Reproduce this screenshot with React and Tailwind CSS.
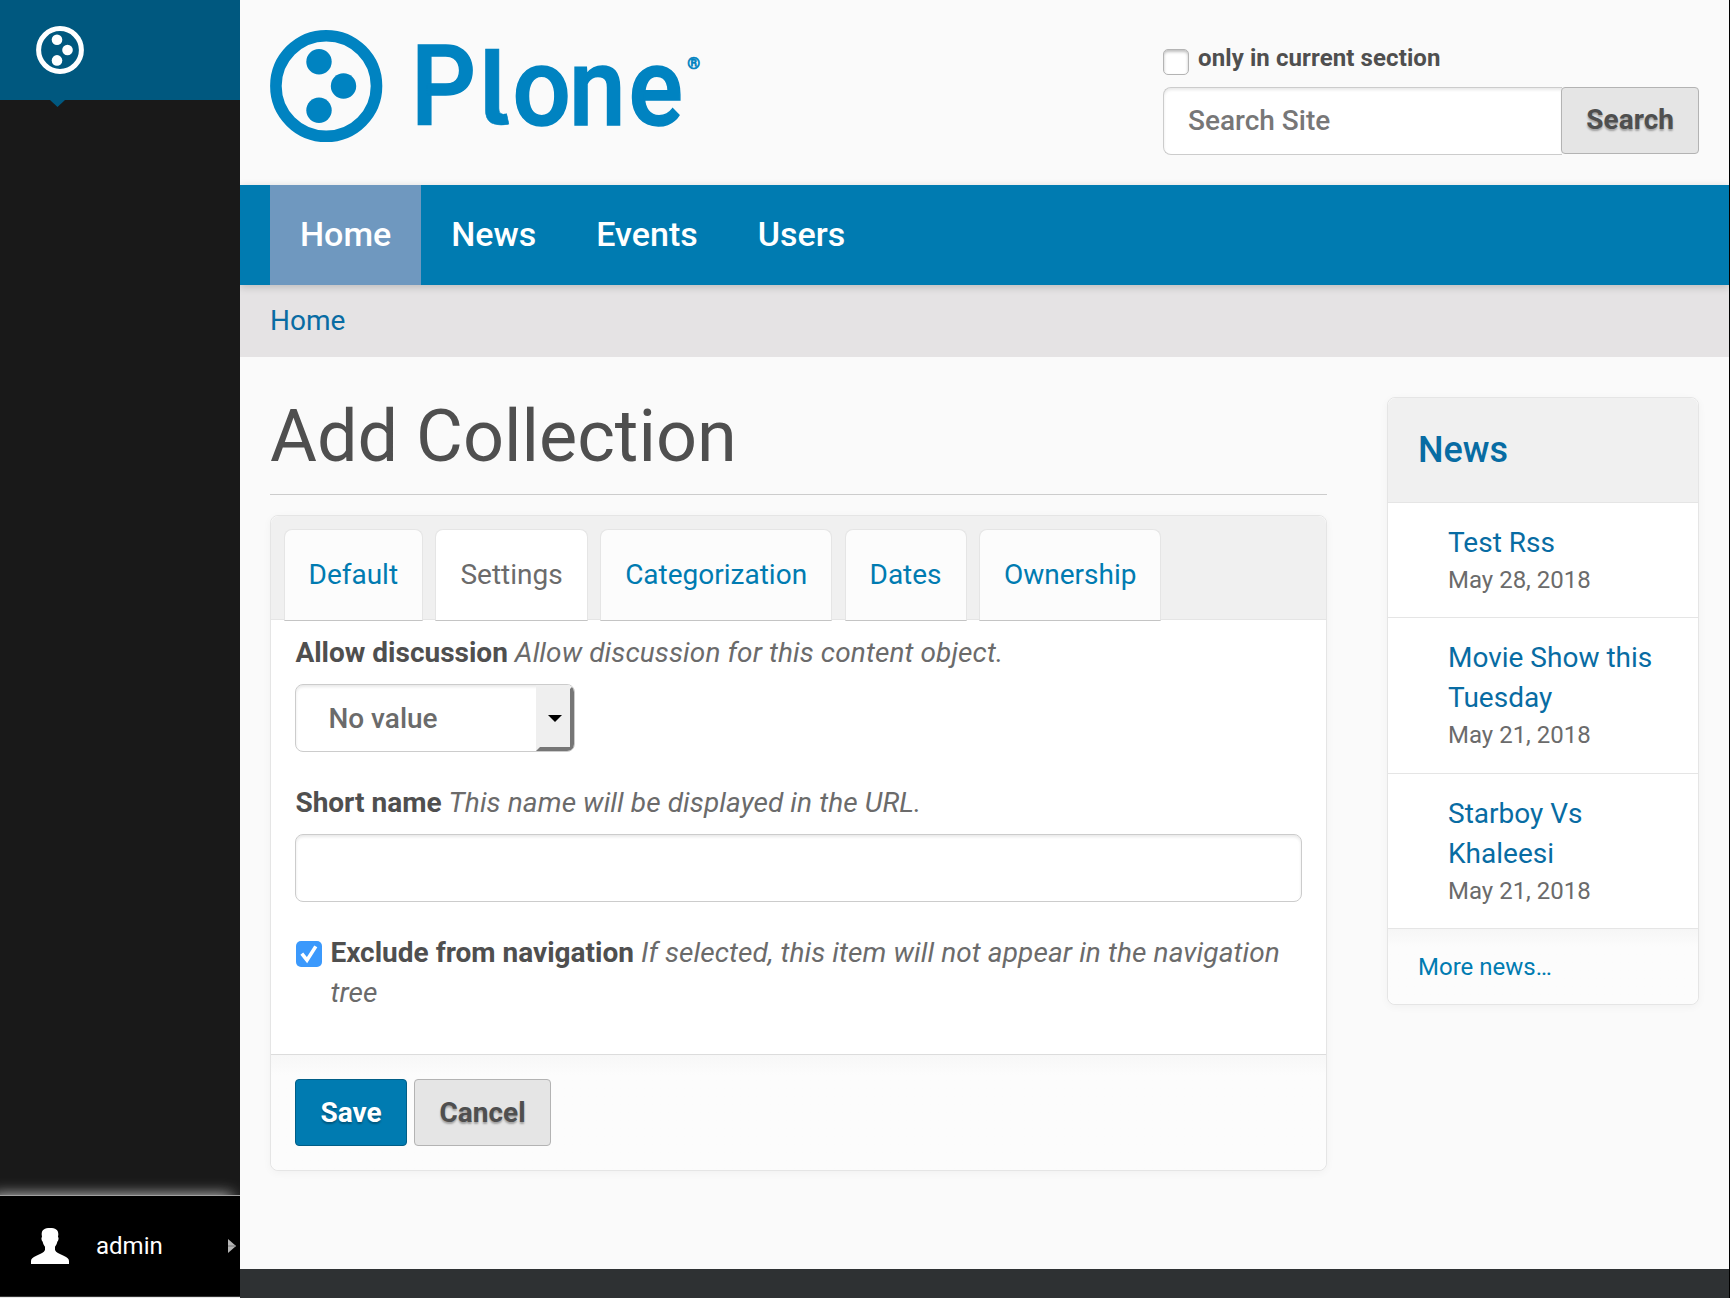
import React from "react";

const navItems = ["Home", "News", "Events", "Users"];
const tabs = ["Default", "Settings", "Categorization", "Dates", "Ownership"];
const news = [
  { title: "Test Rss", date: "May 28, 2018" },
  { title: "Movie Show this Tuesday", date: "May 21, 2018" },
  { title: "Starboy Vs Khaleesi", date: "May 21, 2018" },
];

function ToolbarLogo() {
  return (
    <svg width="48" height="48" viewBox="0 0 48 48" aria-hidden="true">
      <circle cx="24" cy="24" r="21.4" fill="none" stroke="#fff" strokeWidth="5" />
      <circle cx="21" cy="13.7" r="5.3" fill="#fff" />
      <circle cx="31.5" cy="24" r="5.3" fill="#fff" />
      <circle cx="21" cy="34.4" r="5.3" fill="#fff" />
    </svg>
  );
}

function PloneLogo() {
  return (
    <svg
      className="overflow-visible"
      width="430"
      height="112"
      viewBox="0 0 430 112"
      fill="#0083c1"
      role="img"
      aria-label="Plone"
    >
      <circle cx="56.2" cy="56" r="50.3" fill="none" stroke="#0083c1" strokeWidth="11.6" />
      <circle cx="49" cy="31.7" r="12.7" />
      <circle cx="73.5" cy="56" r="12.7" />
      <circle cx="49" cy="80.3" r="12.7" />
      <g fontFamily="Roboto, sans-serif" fontWeight="500" fontSize="113" stroke="#0083c1" strokeWidth="1.6">
        <text transform="translate(141 95.3) scale(.9 .985)">P</text>
        <text
          transform="translate(208.5 95.3)"
          fontFamily="Inter, sans-serif"
          fontWeight="600"
          fontSize="105"
          strokeWidth="0.6"
          className="[font-feature-settings:'cv05']"
        >
          l
        </text>
        <text transform="translate(242.5 95.3) scale(.91 .97)">o</text>
        <text transform="translate(299 95.3) scale(.9 .97)">n</text>
        <text transform="translate(358.5 95.3) scale(.9 .97)">e</text>
      </g>
      <text
        x="417.3"
        y="39"
        fontFamily="Roboto, sans-serif"
        fontWeight="700"
        fontSize="16.5"
        stroke="#0083c1"
        strokeWidth="0.7"
      >
        ®
      </text>
    </svg>
  );
}

function Sidebar() {
  return (
    <aside className="relative z-20 flex w-60 shrink-0 flex-col overflow-hidden bg-[#191919]">
      <div className="relative h-[100px] bg-[#00587f] pl-9 pt-[26px]">
        <ToolbarLogo />
        <svg className="absolute left-[50px] top-[100px]" width="15" height="7" viewBox="0 0 15 7">
          <path d="M0 0h15L7.5 7z" fill="#00587f" />
        </svg>
      </div>
      <div className="flex-1" />
      <div className="flex h-[101px] items-center border-t border-[#a0a0a0] bg-black pl-[31px] pr-1 shadow-[-8px_0_14px_rgba(255,255,255,0.8)]">
        <svg width="38" height="36" viewBox="0 0 114 108" fill="#fff" aria-hidden="true">
          <path d="M57 0C73 0 82 5 82 19l-1 8c3 2 2 10-2 14-2 8-4 11-7 15v10c3 8 12 11 26 17 11 5 16 9 16 16v9H0v-9c0-7 5-11 16-16 14-6 23-9 26-17V56c-3-4-5-7-7-15-4-4-5-12-2-14l-1-8C32 5 41 0 57 0z" />
        </svg>
        <span className="ml-[27px] flex-1 text-2xl leading-[34px] text-white">admin</span>
        <svg width="8" height="14" viewBox="0 0 8 14" aria-hidden="true">
          <path d="M0 0l8 7-8 7z" fill="#b5b5b5" />
          <path d="M0 7h8" stroke="#777" strokeWidth="1" />
        </svg>
      </div>
      <div className="h-px bg-[#333]" />
      <div className="h-px bg-[#e8e8e8]" />
    </aside>
  );
}

function Header() {
  return (
    <header className="flex h-[185px] justify-between pl-[30px] pr-[30px]">
      <div className="pt-[30px]">
        <PloneLogo />
      </div>
      <form className="w-[536px] pt-[41px]">
        <label className="flex items-start">
          <input
            type="checkbox"
            className="mt-2 size-[26px] appearance-none rounded-[5px] border border-[#b4b4b4] bg-white shadow-[inset_0_2px_3px_rgba(0,0,0,0.25)]"
          />
          <span className="ml-[9px] text-2xl leading-[35px] font-bold tracking-[0.1px] text-[#4f4f4f]">
            only in current section
          </span>
        </label>
        <div className="mt-[11px] flex items-start">
          <input
            placeholder="Search Site"
            className="h-[68px] w-[399px] rounded-l-lg border border-r-0 border-[#ccc] bg-white px-6 pb-0.5 text-[28px] font-medium shadow-[inset_0_2px_3px_rgba(0,0,0,0.09)] placeholder:text-[#777]"
          />
          <GreyButton className="-ml-px flex-1 pb-px">Search</GreyButton>
        </div>
      </form>
    </header>
  );
}

function GreyButton({ className = "", children }) {
  return (
    <button
      type="button"
      className={
        "h-[67px] rounded-[4px] border border-[#b3b3b3] bg-[#e5e5e5] px-[24.3px] text-[28px] leading-10 font-bold text-[#4f4f4f] [text-shadow:0_2px_2px_rgba(0,0,0,0.3)] " +
        className
      }
    >
      {children}
    </button>
  );
}

function Nav() {
  return (
    <nav className="relative z-10 flex h-[100px] bg-[#007bb1] pl-[30px] shadow-[0_2px_8px_rgba(0,0,0,0.18)]">
      {navItems.map((item, i) => (
        <a
          key={item}
          className={
            "px-[30px] pt-[29px] text-[34px] leading-10 font-medium text-white " + (i === 0 ? "bg-[#6f98bf]" : "")
          }
        >
          {item}
        </a>
      ))}
    </nav>
  );
}

function Field({ label, help }) {
  return (
    <p className="leading-10">
      <b className="font-bold text-[#4f4f4f]">{label}</b> <i className="tracking-[0.11px] text-[#6b6b6b]">{help}</i>
    </p>
  );
}

function CollectionForm() {
  return (
    <form className="mt-5 rounded-lg border border-[#e5e5e5] bg-white text-[28px] shadow-[0_2px_8px_rgba(0,0,0,0.04)]">
      <div className="flex h-[104px] gap-[12.4px] rounded-t-lg border-b border-[#e5e5e5] bg-[#f0f0f0] px-[12.5px] pt-[13px]">
        {tabs.map((tab) => (
          <a
            key={tab}
            className={
              "h-[92px] rounded-t-lg border border-[#e5e5e5] border-b-[#c4c4c4] px-6 pt-[25px] leading-10 " +
              (tab === "Settings" ? "bg-white text-[#6b6b6b]" : "bg-[#fcfcfc] text-[#007bb1]")
            }
          >
            {tab}
          </a>
        ))}
      </div>
      <div className="pt-[13px] pr-[24.4px] pb-[41px] pl-[24.4px]">
        <Field label="Allow discussion" help="Allow discussion for this content object." />
        <div className="mt-[11px] flex h-[68px] w-[280px] overflow-hidden rounded-lg border border-[#ccc] bg-white shadow-[inset_0_2px_3px_rgba(0,0,0,0.09)]">
          <span className="flex-1 pt-3.5 pl-8 leading-10 font-medium text-[#6b6b6b]">No value</span>
          <span className="flex w-[38px] items-center justify-center border-4 border-t-[#efefef] border-r-[#767676] border-b-[#767676] border-l-[#efefef] bg-[#efefef]">
            <svg width="14" height="7" viewBox="0 0 14 7">
              <path d="M0 0h14L7 7z" fill="#000" />
            </svg>
          </span>
        </div>
        <div className="mt-[31px]">
          <Field label="Short name" help="This name will be displayed in the URL." />
          <input className="mt-[11px] block h-[68px] w-full rounded-lg border border-[#ccc] bg-white shadow-[inset_0_2px_3px_rgba(0,0,0,0.09)]" />
        </div>
        <div className="mt-[31px] flex items-start">
          <span className="mt-2 mr-2 ml-px flex size-[26px] shrink-0 items-center justify-center rounded-[5px] bg-[#3b99fc]">
            <svg width="26" height="26" viewBox="0 0 26 26" aria-hidden="true">
              <path d="M5.8 12.6l5.2 6.6L19.8 5.4" fill="none" stroke="#fff" strokeWidth="3.6" />
            </svg>
          </span>
          <Field
            label="Exclude from navigation"
            help="If selected, this item will not appear in the navigation tree"
          />
        </div>
      </div>
      <div className="flex gap-[7px] rounded-b-lg border-t border-[#dcdcdc] bg-linear-to-b from-[#f7f7f7] to-[#fcfcfc] to-[20px] px-6 pt-6 pb-6">
        <button
          type="button"
          className="h-[67px] rounded-[4px] border border-[#005e87] bg-[#007bb1] px-[24.5px] leading-10 font-bold text-white [text-shadow:0_2px_2px_rgba(0,0,0,0.3)]"
        >
          Save
        </button>
        <GreyButton>Cancel</GreyButton>
      </div>
    </form>
  );
}

function NewsPortlet() {
  return (
    <aside className="mt-10 h-fit w-[312px] shrink-0 rounded-lg border border-[#e5e5e5] bg-white shadow-[0_2px_8px_rgba(0,0,0,0.04)]">
      <h2 className="h-[105px] rounded-t-lg border-b border-[#e5e5e5] bg-[#f0f0f0] pt-8 pl-[30px] text-4xl leading-10 font-medium text-[#086ca3]">
        News
      </h2>
      <ul>
        {news.map((n) => (
          <li key={n.title} className="border-b border-[#e5e5e5] pt-5 pr-[30px] pb-[19.3px] pl-[60px]">
            <a className="block text-[28px] leading-10 text-[#086ca3]">{n.title}</a>
            <span className="block text-2xl leading-[35px] text-[#6b6b6b]">{n.date}</span>
          </li>
        ))}
      </ul>
      <div className="h-[75px] rounded-b-lg bg-linear-to-b from-[#f6f6f6] to-[#fcfcfc] to-[18px] pt-[21px] pl-[30px] text-2xl leading-[34px] text-[#007bb1]">
        More news…
      </div>
    </aside>
  );
}

export default function App() {
  return (
    <div className="flex h-[1298px] w-[1730px] overflow-hidden bg-[#fafafa] font-[Roboto,sans-serif]">
      <Sidebar />
      <div className="flex min-w-0 flex-1 flex-col border-r border-black">
        <Header />
        <Nav />
        <div className="h-[72px] bg-[#e5e3e4] pt-4 pl-[30px] text-[28px] leading-10 text-[#086ca3]">Home</div>
        <div className="flex flex-1 justify-between px-[30px]">
          <main className="w-[1057px] pt-10">
            <h1 className="h-[98px] border-b border-[#ccc] text-[72px] leading-[80px] text-[#4f4f4f]">Add Collection</h1>
            <CollectionForm />
          </main>
          <NewsPortlet />
        </div>
        <footer className="h-[29px] bg-[#2e3133]" />
      </div>
    </div>
  );
}
